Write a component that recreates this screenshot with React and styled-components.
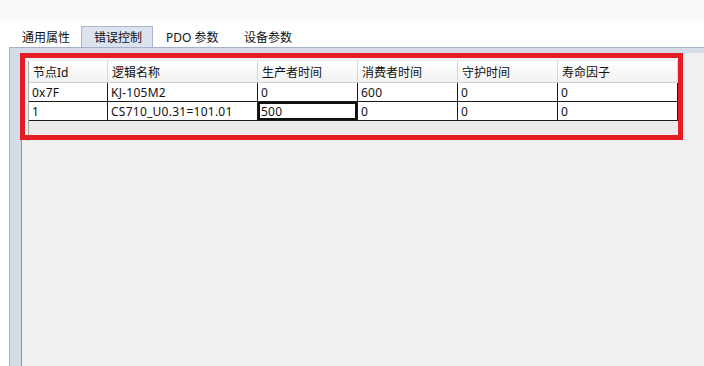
import React from 'react';
import styled, { createGlobalStyle } from 'styled-components';

const GlobalStyle = createGlobalStyle`
    html, body {
        margin: 0;
        padding: 0;
        background: #ffffff;
    }

    body {
        font-family: "Noto Sans", "Noto Sans CJK SC", sans-serif;
        font-size: 12px;
        color: #111;
        overflow: hidden;
    }
`;

const Screen = styled.div`
    position: relative;
    width: 704px;
    height: 366px;
    display: flex;
    flex-direction: column;
    overflow: hidden;
`;

const TopBand = styled.div`
    height: 23px;
    background: #fafafa;
`;

const TabStrip = styled.div`
    display: flex;
    align-items: flex-end;
    height: 24px;
    padding-left: 9px;
    background: #ffffff;
`;

const Tab = styled.div`
    height: 21px;
    padding: 0 12px 1px;
    display: flex;
    align-items: center;
    box-sizing: border-box;
    white-space: nowrap;
    font-size: 12px;
    color: #111;
    background: ${p => (p.active ? '#dce2ee' : 'transparent')};
    border: 1px solid ${p => (p.active ? '#aab7cf' : 'transparent')};
    border-bottom: none;
    width: ${p => p.w}px;
`;

const Pane = styled.div`
    flex: 1;
    display: flex;
    background: #d5dbe9;
    border-top: 1px solid #a3b1cb;
    border-left: 1px solid #a3b1cb;
    margin-left: 9px;
    padding: 5px 0 0 11px;
`;

const Inner = styled.div`
    flex: 1;
    background: #f0f0f0;
    border-left: 1px solid #7f95b9;
    padding: 8px 0 0 6px;
`;

const Grid = styled.div`
    width: 650px;
    height: 80px;
    background: #ebebeb;
    border-left: 1px solid #a8a8a8;
    box-sizing: border-box;
`;

const Row = styled.div`
    display: grid;
    grid-template-columns: 79px 150px 100px 100px 100px 120px;
`;

const HeadCell = styled.div`
    height: 22px;
    box-sizing: border-box;
    padding: 0 4px;
    display: flex;
    align-items: center;
    background: linear-gradient(#ffffff, #f2f2f2);
    border-right: 1px solid #d6d6d6;
    border-bottom: 1px solid #cfcfcf;
    white-space: nowrap;
`;

const Cell = styled.div`
    height: 19px;
    box-sizing: border-box;
    padding: 0 3px;
    display: flex;
    align-items: center;
    letter-spacing: 0.25px;
    background: #ffffff;
    border-right: 1px solid #1a1a1a;
    border-bottom: 1px solid #1a1a1a;
    white-space: nowrap;
    box-shadow: ${p => (p.selected ? 'inset 0 0 0 2px #111' : 'none')};
`;

const Mark = styled.div`
    position: absolute;
    left: 20px;
    top: 53px;
    width: 663px;
    height: 87px;
    box-sizing: border-box;
    border: 5px solid #e61d25;
    pointer-events: none;
`;

const tabs = [
    { label: '通用属性', w: 72 },
    { label: '错误控制', w: 72, active: true },
    { label: 'PDO 参数', w: 78 },
    { label: '设备参数', w: 72 },
];

const columns = ['节点Id', '逻辑名称', '生产者时间', '消费者时间', '守护时间', '寿命因子'];

const rows = [
    ['0x7F', 'KJ-105M2', '0', '600', '0', '0'],
    ['1', 'CS710_U0.31=101.01', '500', '0', '0', '0'],
];

export default function App() {
    return (
        <Screen>
            <GlobalStyle />
            <TopBand />
            <TabStrip>
                {tabs.map(t => (
                    <Tab key={t.label} active={t.active} w={t.w}>{t.label}</Tab>
                ))}
            </TabStrip>
            <Pane>
                <Inner>
                    <Grid>
                        <Row>
                            {columns.map(c => <HeadCell key={c}>{c}</HeadCell>)}
                        </Row>
                        {rows.map((r, i) => (
                            <Row key={i}>
                                {r.map((v, j) => (
                                    <Cell key={j} selected={i === 1 && j === 2}>{v}</Cell>
                                ))}
                            </Row>
                        ))}
                    </Grid>
                </Inner>
            </Pane>
            <Mark />
        </Screen>
    );
}
